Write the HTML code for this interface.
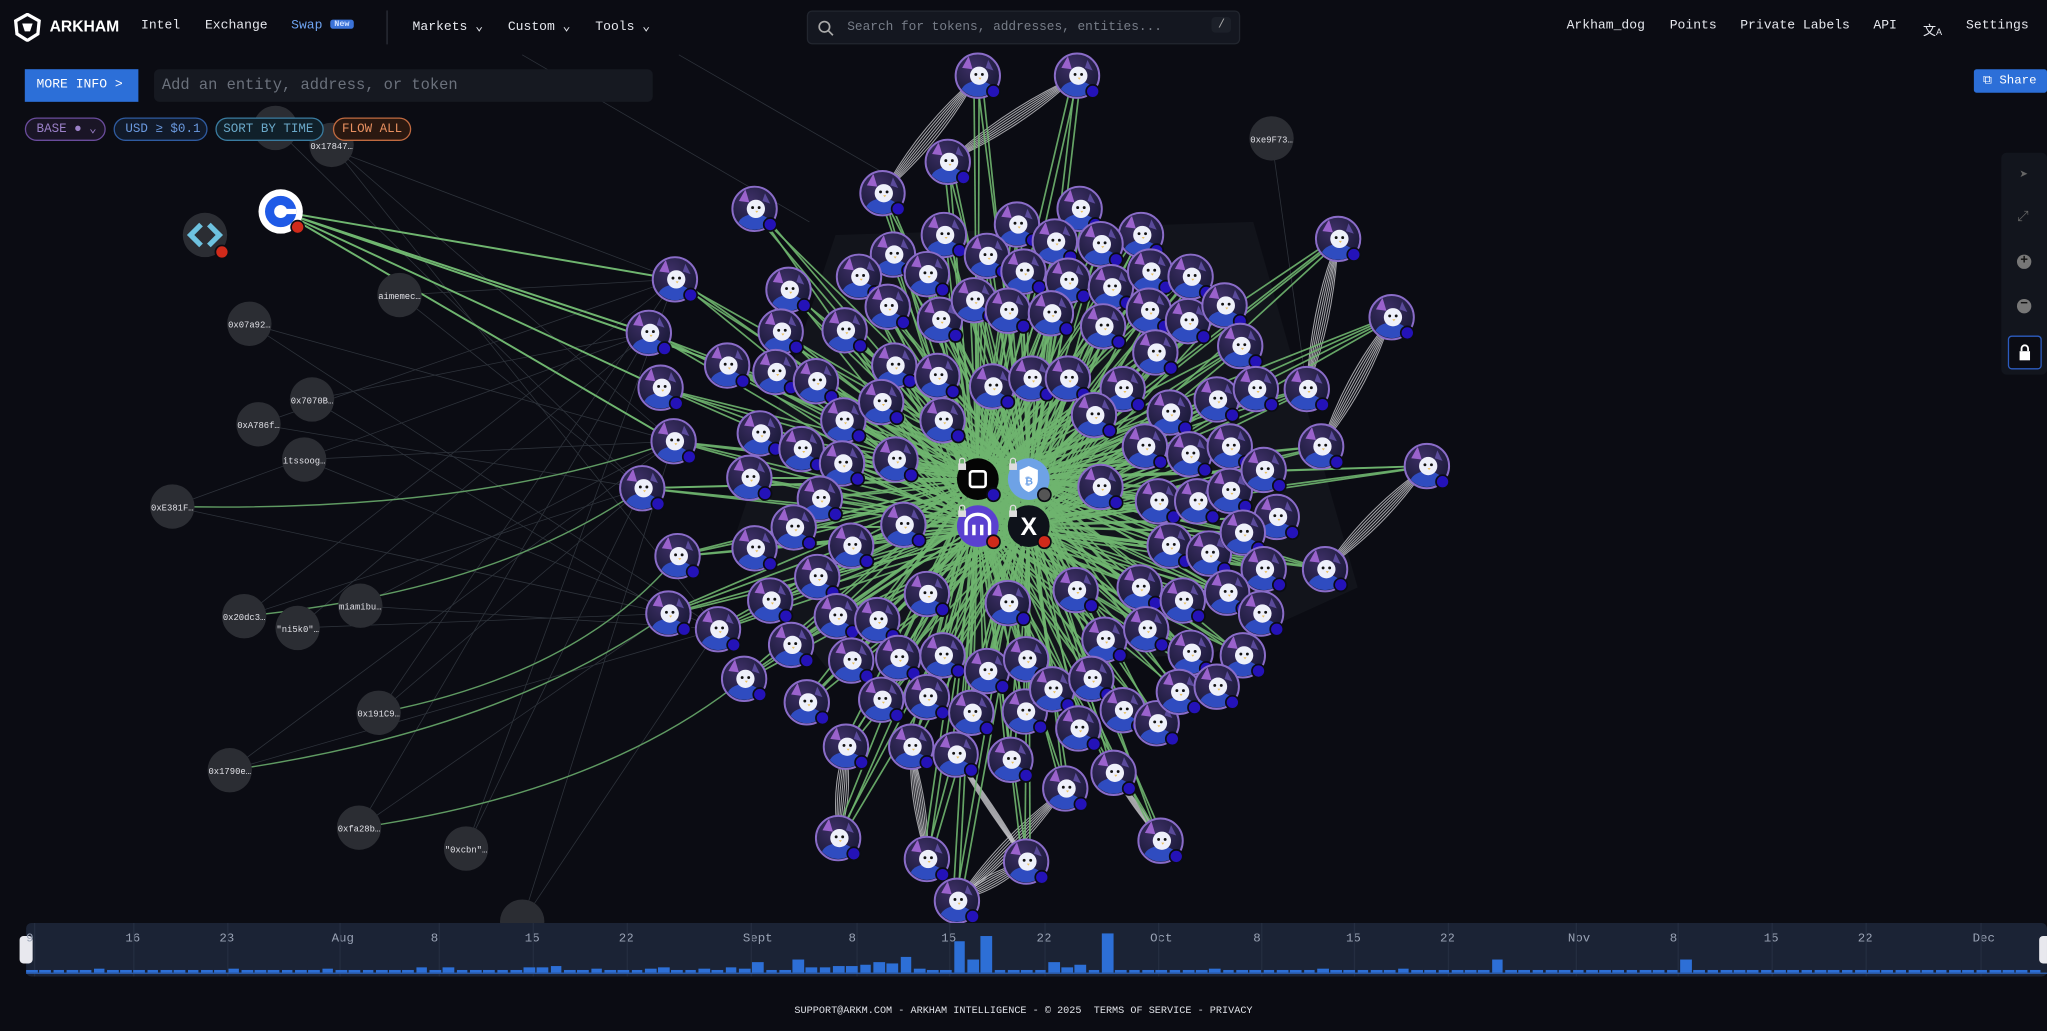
<!DOCTYPE html>
<html><head><meta charset="utf-8">
<style>
*{margin:0;padding:0;box-sizing:border-box}
html,body{width:2047px;height:1031px;overflow:hidden;background:#0b0c13;font-family:"Liberation Mono",monospace;color:#e6e8ee}
#root{position:absolute;left:0;top:0;width:1568px;height:790px;transform:scale(1.30548);transform-origin:0 0;overflow:hidden}
svg#g{position:absolute;left:0;top:0}
.nav{position:absolute;top:0;left:0;width:1568px;height:42px;font-size:10px}
.nav span{position:absolute;top:15px;white-space:nowrap}
.btn{position:absolute;font-size:10px}
.pill{position:absolute;top:90px;height:18px;border-radius:9px;border:1px solid;font-size:9.6px;line-height:16px;padding:0 8px;white-space:nowrap}
.tl{position:absolute;left:20px;top:707px;width:1548px;height:41px;background:#1b2335;border-radius:4px}
.tl span{position:absolute;top:6px;font-size:9.5px;color:#9aa3b5}
</style></head><body><div id="root">
<svg id="g" width="1568" height="790" viewBox="0 0 1568 790">
<defs>
<clipPath id="cc"><circle cx="0" cy="0" r="16"/></clipPath>
<radialGradient id="og" cx="0.4" cy="0.3" r="0.8"><stop offset="0" stop-color="#3d2f66"/><stop offset="1" stop-color="#141630"/></radialGradient>
<symbol id="owl" viewBox="-20 -20 40 40" width="40" height="40" overflow="visible">
<circle r="17" fill="url(#og)" stroke="#8a6cc8" stroke-width="1.5"/>
<g clip-path="url(#cc)">
<path d="M-12 -6 L-7 -15 L-4 -5Z" fill="#9a62cc"/>
<path d="M8 -12 L12 -4 L6 -6Z" fill="#5a4a9a"/>
<ellipse cx="0" cy="13" rx="13" ry="9" fill="#2f4cc0"/>
<ellipse cx="1" cy="0" rx="7" ry="7" fill="#eef0fa"/>
<circle cx="-1.5" cy="-1" r="1.1" fill="#111"/><circle cx="3.5" cy="-1" r="1.1" fill="#111"/>
<path d="M0.5 1.5 l1.2 1.6 l1.2-1.6z" fill="#e8c060"/>
</g>
<circle cx="12" cy="12" r="5" fill="#2412b8" stroke="#0b0c13" stroke-width="1.3"/>
</symbol>
</defs>
<path d="M640 180 L960 170 L1040 450 L930 500 L640 520 L560 420Z" fill="#12141b"/>
<g id="lines"></g>
<g id="nodes"></g>
</svg>

<div class="nav">
<svg style="position:absolute;left:10px;top:10px" width="22" height="22" viewBox="0 0 22 22"><path d="M11 1 L20 6 L19 16 L11 21 L3 16 L2 6Z" fill="none" stroke="#fff" stroke-width="2.5"/><path d="M7 8 L15 8 L13 14 L9 14Z" fill="#fff"/></svg>
<span style="left:38px;font-family:'Liberation Sans',sans-serif;font-weight:bold;font-size:12px;top:13px;color:#fff">ARKHAM</span>
<span style="left:108px">Intel</span>
<span style="left:157px">Exchange</span>
<span style="left:223px;color:#6ea3f0">Swap <b style="background:#3b73d8;color:#cfe0ff;font-size:6.5px;padding:0 3px;border-radius:2px;vertical-align:2px">New</b></span>
<div style="position:absolute;left:296px;top:8px;width:1px;height:26px;background:#2c2f38"></div>
<span style="left:316px">Markets ⌄</span>
<span style="left:389px">Custom ⌄</span>
<span style="left:456px">Tools ⌄</span>
<div style="position:absolute;left:618px;top:8px;width:332px;height:26px;background:#141720;border:1px solid #22262f;border-radius:4px">
<svg style="position:absolute;left:7px;top:6px" width="13" height="13" viewBox="0 0 13 13"><circle cx="5.5" cy="5.5" r="4" fill="none" stroke="#aaa" stroke-width="1.3"/><path d="M8.5 8.5 L12 12" stroke="#aaa" stroke-width="1.3"/></svg>
<span style="left:30px;top:6px;color:#777d88;font-size:9.8px">Search for tokens, addresses, entities...</span>
<span style="left:309px;top:4px;background:#1c2029;padding:1px 5px;border-radius:3px;color:#aaa;font-size:9px">/</span>
</div>
<span style="left:1200px">Arkham_dog</span>
<span style="left:1279px">Points</span>
<span style="left:1333px">Private Labels</span>
<span style="left:1435px">API</span>
<span style="left:1473px;font-family:'Liberation Sans','Noto Sans CJK SC',sans-serif">文<small style="font-size:7px">A</small></span>
<span style="left:1506px">Settings</span>
</div>

<div class="btn" style="left:19px;top:53px;width:87px;height:25px;background:#2c6fd8;color:#fff;line-height:25px;padding-left:9px">MORE INFO &gt;</div>
<div class="btn" style="left:118px;top:53px;width:382px;height:25px;background:#161921;border-radius:4px;color:#6b717c;font-size:11.8px;line-height:25px;padding-left:6px">Add an entity, address, or token</div>
<div class="pill" style="left:19px;width:62px;border-color:#6a4c9c;color:#9b80c8;background:#1a1526">BASE ● ⌄</div>
<div class="pill" style="left:87px;width:72px;border-color:#2f5ba0;color:#6b9ae0;background:#111a2a">USD ≥ $0.1</div>
<div class="pill" style="left:165px;width:83px;border-color:#3a7ca0;color:#6aa8c8;background:#10202a;padding:0 5px">SORT BY TIME</div>
<div class="pill" style="left:255px;width:60px;border-color:#c06a40;color:#e89060;background:#2a1810;padding:0 6px">FLOW ALL</div>

<div class="btn" style="left:1512px;top:53px;width:56px;height:18px;background:#2c6fd8;color:#fff;line-height:18px;padding-left:7px;border-radius:2px;font-size:9.5px">⧉ Share</div>
<div style="position:absolute;left:1533px;top:117px;width:35px;height:170px;background:#12151d;border-radius:4px">
<div style="position:absolute;left:14px;top:10px;color:#666;font-size:11px">➤</div>
<div style="position:absolute;left:12px;top:44px;color:#666;font-size:11px">⤢</div>
<div style="position:absolute;left:12px;top:78px;width:11px;height:11px;border-radius:50%;background:#777;color:#111;font-size:10px;line-height:11px;text-align:center;font-weight:bold">+</div>
<div style="position:absolute;left:12px;top:112px;width:11px;height:11px;border-radius:50%;background:#777;color:#111;font-size:10px;line-height:10px;text-align:center;font-weight:bold">−</div>
<div style="position:absolute;left:5px;top:140px;width:26px;height:26px;border:1px solid #2c5cc0;border-radius:3px;background:#0b0c13"><svg width="24" height="24" viewBox="0 0 24 24"><rect x="8" y="11" width="8" height="7" fill="#fff"/><path d="M9.5 11 V9 a2.5 2.5 0 0 1 5 0 V11" fill="none" stroke="#fff" stroke-width="1.4"/></svg></div>
</div>

<div class="tl" id="tl">
<div style="position:absolute;left:-5px;top:10px;width:10px;height:21px;background:#e8e8ee;border-radius:3px"></div>
<div style="position:absolute;right:-4px;top:10px;width:10px;height:21px;background:#e8e8ee;border-radius:3px"></div>
</div>
<div style="position:absolute;left:0;top:771px;width:1568px;text-align:center;font-size:7.8px;color:#e0e2e8">SUPPORT@ARKM.COM - ARKHAM INTELLIGENCE - © 2025 &nbsp;TERMS OF SERVICE - PRIVACY</div>
</div>
<script>
var NS="http://www.w3.org/2000/svg";
function el(t,a,p){var e=document.createElementNS(NS,t);for(var k in a)e.setAttribute(k,a[k]);p.appendChild(e);return e;}
var L=document.getElementById('lines'),N=document.getElementById('nodes');
var owls=[[749,58],[825,58],[726,124],[676,148],[578,160],[827,160],[779,172],[874,180],[723,180],[684,195],[756,196],[808,185],[843,187],[1025,183],[517,214],[604,222],[658,212],[710,210],[784,208],[818,215],[851,220],[881,208],[912,212],[1066,243],[497,255],[598,254],[647,253],[680,235],[720,245],[746,230],[772,238],[805,240],[845,250],[880,238],[910,246],[938,234],[557,280],[594,285],[625,292],[685,280],[718,288],[760,296],[790,290],[818,290],[860,298],[885,270],[950,265],[506,297],[646,322],[675,308],[722,322],[838,318],[896,316],[932,306],[962,298],[1001,298],[516,338],[582,332],[614,344],[645,355],[686,352],[877,342],[911,348],[942,342],[1012,342],[1093,357],[492,374],[574,366],[628,382],[843,373],[887,384],[917,384],[942,376],[968,360],[978,396],[608,404],[652,418],[692,402],[896,418],[926,424],[952,408],[968,436],[1015,436],[519,426],[578,420],[626,442],[873,450],[906,460],[940,454],[966,470],[590,460],[641,472],[672,475],[710,455],[772,462],[824,452],[512,470],[550,482],[606,494],[652,506],[688,504],[722,502],[756,514],[786,505],[846,490],[878,482],[912,500],[952,502],[570,520],[618,538],[675,536],[710,534],[744,546],[785,545],[806,528],[836,520],[860,544],[886,554],[903,530],[932,526],[648,572],[698,572],[732,578],[774,582],[826,558],[816,604],[853,592],[642,642],[710,658],[786,660],[733,690],[889,644]];
var hubs=[[749,367],[788,367],[749,403],[788,403]];
var grays=[[211,98,"0x02e9…"],[254,111,"0x17847…"],[974,106,"0xe9F73…"],[306,226,"aimemec…"],[191,248,"0x07a92…"],[239,306,"0x7070B…"],[198,325,"0xA786f…"],[233,352,"itssoog…"],[132,388,"0xE381F…"],[187,472,"0x20dc3…"],[276,464,"miamibu…"],[228,481,"\"ni5k0\"…"],[290,546,"0x191C9…"],[176,590,"0x1790e…"],[275,634,"0xfa28b…"],[357,650,"\"0xcbn\"…"],[400,706,""]];
var leftT=[[517,214],[497,255],[506,297],[516,338],[492,374],[519,426],[512,470],[550,482],[570,520]];
grays.forEach(function(g,i){if(i==2)return;for(var j=0;j<2;j++){var o=leftT[(i*3+j*4)%leftT.length];el('line',{x1:g[0],y1:g[1],x2:o[0],y2:o[1],stroke:'#2e333b','stroke-width':0.6},L);}});
el('line',{x1:400,y1:42,x2:620,y2:170,stroke:'#2e333b','stroke-width':0.6},L);
el('line',{x1:520,y1:42,x2:690,y2:140,stroke:'#2e333b','stroke-width':0.6},L);
el('line',{x1:974,y1:106,x2:1001,y2:298,stroke:'#2e333b','stroke-width':0.6},L);
[[275,634,570,520],[176,590,512,470],[290,546,519,426],[187,472,492,374],[132,388,516,338]].forEach(function(c){el('path',{d:'M'+c[0]+' '+c[1]+' Q'+((c[0]+c[2])/2+40)+' '+((c[1]+c[3])/2+30)+' '+c[2]+' '+c[3],fill:'none',stroke:'#5f9a62','stroke-width':1.1},L);});
[[517,214],[497,255],[506,297],[516,338],[557,280]].forEach(function(o){el('line',{x1:215,y1:162,x2:o[0],y2:o[1],stroke:'#6fb56f','stroke-width':1.5},L);});
[[[749,58],[676,148]],[[825,58],[726,124]],[[1025,183],[1001,298]],[[1066,243],[1012,342]],[[1093,357],[1015,436]],[[648,572],[642,642]],[[698,572],[710,658]],[[786,660],[733,690]],[[816,604],[733,690]],[[853,592],[889,644]],[[732,578],[786,660]]].forEach(function(b){for(var k=-3;k<=3;k++){el('path',{d:'M'+b[0][0]+' '+b[0][1]+' Q'+((b[0][0]+b[1][0])/2+k*3)+' '+((b[0][1]+b[1][1])/2+k*2)+' '+b[1][0]+' '+b[1][1],fill:'none',stroke:'#c8c8cc','stroke-width':0.8,opacity:0.8},L);}});
owls.forEach(function(o){hubs.forEach(function(h,j){el('line',{x1:o[0]+(j-1.5)*2,y1:o[1],x2:h[0],y2:h[1],stroke:'#6fb56f','stroke-width':1.3,opacity:0.9},L);});});
grays.forEach(function(g){el('circle',{cx:g[0],cy:g[1],r:17,fill:'#2b2d33'},N);if(g[2]){var t=el('text',{x:g[0],y:g[1]+3,'text-anchor':'middle','font-size':6.8,fill:'#e0e0e6','font-family':'Liberation Mono,monospace'},N);t.textContent=g[2];}});
owls.forEach(function(o){el('use',{href:'#owl',x:o[0]-20,y:o[1]-20,width:40,height:40},N);});
function badge(x,y,c){el('circle',{cx:x,cy:y,r:5,fill:c,stroke:'#0b0c13','stroke-width':1.3},N);}
function lock(x,y){el('rect',{x:x-3,y:y,width:6,height:5,fill:'#ddd'},N);el('path',{d:'M'+(x-2)+' '+y+' v-2 a2 2 0 0 1 4 0 v2',fill:'none',stroke:'#ddd','stroke-width':1},N);}
el('circle',{cx:749,cy:367,r:16,fill:'#050505'},N);el('rect',{x:743,y:361,width:12,height:12,rx:2,fill:'none',stroke:'#fff','stroke-width':2},N);badge(761,379,'#2412b8');lock(737,355);
el('circle',{cx:788,cy:367,r:16,fill:'#6ea2e6'},N);el('path',{d:'M781 360 L788 357 L795 360 V367 Q795 374 788 377 Q781 374 781 367Z',fill:'#fff'},N);var bt=el('text',{x:788,y:371,'text-anchor':'middle','font-size':8,fill:'#6ea2e6','font-family':'Liberation Sans,sans-serif','font-weight':'bold'},N);bt.textContent='₿';badge(800,379,'#555');lock(776,355);
el('circle',{cx:749,cy:403,r:16,fill:'#5a40d0'},N);el('path',{d:'M740 410 V401 a9 7 0 0 1 18 0 V410 M746 410 V402 M752 410 V402',fill:'none',stroke:'#fff','stroke-width':2.6},N);badge(761,415,'#d02a1a');lock(737,391);
el('circle',{cx:788,cy:403,r:16,fill:'#0e121a'},N);var xt=el('text',{x:788,y:410,'text-anchor':'middle','font-size':19,fill:'#fff','font-family':'Liberation Sans,sans-serif','font-weight':'bold'},N);xt.textContent='X';badge(800,415,'#d02a1a');lock(776,391);
el('circle',{cx:215,cy:162,r:17,fill:'#fff'},N);el('circle',{cx:215,cy:162,r:12,fill:'#1f5ae6'},N);el('circle',{cx:215,cy:162,r:5,fill:'#fff'},N);el('rect',{x:217,y:160,width:10,height:4,fill:'#fff'},N);badge(228,174,'#d02a1a');
el('circle',{cx:157,cy:180,r:17,fill:'#2b2d33'},N);el('path',{d:'M154 172 L146 180 L154 188 M160 172 L168 180 L160 188',fill:'none',stroke:'#6ec2e0','stroke-width':4},N);badge(170,193,'#d02a1a');
var tl=document.getElementById('tl');
var labs=[[0,"9"],[76,"16"],[148,"23"],[234,"Aug"],[310,"8"],[382,"15"],[454,"22"],[549,"Sept"],[630,"8"],[701,"15"],[774,"22"],[861,"Oct"],[940,"8"],[1011,"15"],[1083,"22"],[1181,"Nov"],[1259,"8"],[1331,"15"],[1403,"22"],[1491,"Dec"]];
labs.forEach(function(l){var s=document.createElement('span');s.style.left=l[0]+'px';s.textContent=l[1];tl.appendChild(s);var d=document.createElement('div');d.style.cssText='position:absolute;top:0;bottom:0;width:1px;background:#242d40;left:'+(l[0]+6)+'px';tl.appendChild(d);});
var H={5:3,10:2,15:3,22:3,29:4,31:4,37:4,38:4,39:5,42:3,46:3,47:4,50:3,52:4,53:3,54:8,57:10,58:4,59:4,60:5,61:5,62:6,63:8,64:7,65:12,66:3,69:24,70:10,71:28,76:8,77:4,78:6,80:30,88:3,96:3,98:2,102:3,109:10,123:10};
for(var i=0;i<150;i++){var h=H[i]||2;var b=document.createElement('div');b.style.cssText='position:absolute;bottom:3px;width:8.8px;background:#2d6fd6;left:'+(i*10.3)+'px;height:'+h+'px';tl.appendChild(b);}
var bl=document.createElement('div');bl.style.cssText='position:absolute;left:0;right:0;bottom:2px;height:1px;background:#2d5fb0';tl.appendChild(bl);
</script>
</body></html>
